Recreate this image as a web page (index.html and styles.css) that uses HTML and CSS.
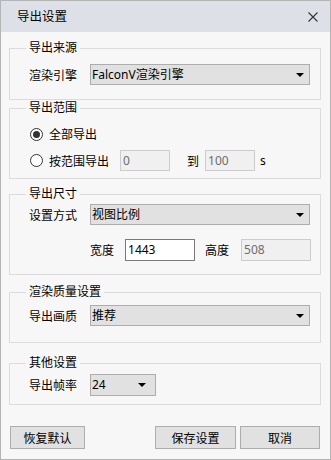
FILE: index.html
```html
<!DOCTYPE html>
<html lang="zh-CN">
<head>
  <meta charset="UTF-8">
  <title>导出设置</title>
  <link rel="stylesheet" href="styles.css">
</head>
<body>
  <div class="dialog">
    <div class="titlebar">
      <span class="title">导出设置</span>
      <svg class="close" width="10" height="10" viewBox="0 0 10 10">
        <path d="M0.5 0.5 L9.5 9.5 M9.5 0.5 L0.5 9.5" stroke="#333" stroke-width="1.1" fill="none"/>
      </svg>
    </div>

    <div class="content">
      <fieldset class="group g-source">
        <legend>导出来源</legend>
        <div class="row">
          <span class="label">渲染引擎</span>
          <div class="combo">FalconV渲染引擎</div>
        </div>
      </fieldset>

      <fieldset class="group g-range">
        <legend>导出范围</legend>
        <div class="radio-row">
          <span class="radio checked"></span>
          <span class="radio-text">全部导出</span>
        </div>
        <div class="radio-row second">
          <span class="radio"></span>
          <span class="radio-text">按范围导出</span>
          <span class="input disabled range-from">0</span>
          <span class="to">到</span>
          <span class="input disabled">100</span>
          <span class="unit">s</span>
        </div>
      </fieldset>

      <fieldset class="group g-size">
        <legend>导出尺寸</legend>
        <div class="row">
          <span class="label">设置方式</span>
          <div class="combo">视图比例</div>
        </div>
        <div class="size-row">
          <span>宽度</span>
          <span class="input size-input">1443</span>
          <span class="height-label">高度</span>
          <span class="input disabled size-input">508</span>
        </div>
      </fieldset>

      <fieldset class="group g-quality">
        <legend>渲染质量设置</legend>
        <div class="row">
          <span class="label">导出画质</span>
          <div class="combo">推荐</div>
        </div>
      </fieldset>

      <fieldset class="group g-other">
        <legend>其他设置</legend>
        <div class="row">
          <span class="label">导出帧率</span>
          <div class="combo small">24</div>
        </div>
      </fieldset>

      <div class="buttons">
        <button class="btn reset">恢复默认</button>
        <button class="btn save">保存设置</button>
        <button class="btn cancel">取消</button>
      </div>
    </div>
  </div>
</body>
</html>
```

FILE: styles.css
```css
body {
  margin: 0;
  font-family: "Noto Sans", "Noto Sans CJK SC", sans-serif;
  font-size: 12px;
  color: #000;
  background: #fff;
  white-space: nowrap;
}
.dialog {
  width: 331px;
  height: 460px;
  box-sizing: border-box;
  border: 1px solid #b4b4b4;
  background: #f7f7f7;
  display: flex;
  flex-direction: column;
}
.titlebar {
  height: 31px;
  flex: none;
  background: #dde1e7;
  display: flex;
  align-items: center;
  justify-content: space-between;
  padding: 0 12px 0 16px;
}
.title {
  font-size: 12.5px;
  line-height: 16px;
}
.close {
  display: block;
}
.content {
  padding: 8px 9px 0 8px;
  display: flex;
  flex-direction: column;
}
.group {
  margin: 0;
  border: 1px solid #dcdcdc;
  padding: 8px 10px 14px 19px;
  min-width: 0;
}
.group legend {
  padding: 0 3px;
  margin-left: -3px;
  line-height: 16px;
}
.g-range {
  padding-bottom: 7px;
}
.g-size {
  margin-top: 7px;
  padding-top: 2px;
  padding-bottom: 13px;
}
.g-quality {
  margin-top: 9px;
  padding-top: 5px;
  padding-bottom: 16px;
}
.g-other {
  margin-top: 12px;
  padding-top: 3px;
  padding-bottom: 8px;
}
.row {
  display: flex;
  align-items: center;
}
.label {
  width: 61px;
  flex: none;
}
.combo {
  position: relative;
  width: 220px;
  height: 21px;
  box-sizing: border-box;
  border: 1px solid #adadad;
  background: #e1e1e1;
  padding-left: 1px;
  line-height: 19px;
}
.combo::after {
  content: "";
  position: absolute;
  right: 5px;
  top: 8px;
  border-left: 4px solid transparent;
  border-right: 4px solid transparent;
  border-top: 4px solid #000;
}
.combo.small {
  width: 66px;
  height: 22px;
  line-height: 20px;
}
.combo.small::after {
  right: 9px;
}
.radio-row {
  display: flex;
  align-items: center;
  height: 20px;
}
.radio-row.second {
  height: 21px;
  margin-top: 6px;
}
.radio-row > * {
  flex: none;
}
.radio {
  width: 13px;
  height: 13px;
  box-sizing: border-box;
  border: 1px solid #333;
  border-radius: 50%;
  background: #fff;
  margin-left: 1px;
  display: flex;
  align-items: center;
  justify-content: center;
}
.radio.checked::after {
  content: "";
  width: 7px;
  height: 7px;
  border-radius: 50%;
  background: #333;
}
.radio-text {
  margin-left: 6px;
}
.input {
  width: 50px;
  height: 21px;
  box-sizing: border-box;
  border: 1px solid #7a7a7a;
  background: #fff;
  padding-left: 2px;
  line-height: 19px;
}
.input.disabled {
  border-color: #cccccc;
  background: #f0f0f0;
  color: #6d6d6d;
}
.range-from {
  margin-left: 11px;
}
.to {
  margin-left: 17px;
  margin-right: 6px;
}
.unit {
  margin-left: 5px;
}
.size-row {
  display: flex;
  align-items: center;
  margin-top: 14px;
  margin-left: 61px;
}
.size-row > * {
  flex: none;
}
.size-input {
  width: 70px;
  height: 22px;
  line-height: 20px;
  margin-left: 11px;
}
.height-label {
  margin-left: 10px;
}
.size-row .size-input.disabled {
  margin-left: 12px;
}
.buttons {
  display: flex;
  margin-top: 21px;
  padding-left: 1px;
}
.btn {
  height: 23px;
  box-sizing: border-box;
  border: 1px solid #adadad;
  background: #e1e1e1;
  font-family: inherit;
  font-size: 12px;
  color: #000;
  padding: 0;
  margin: 0;
}
.reset {
  width: 75px;
}
.save {
  width: 81px;
  margin-left: auto;
}
.cancel {
  width: 80px;
  margin-left: 4px;
  margin-right: 1px;
}
```
